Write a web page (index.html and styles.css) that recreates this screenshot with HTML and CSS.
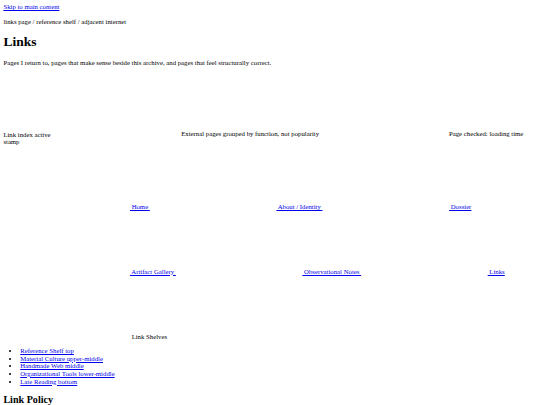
FILE: index.html
```html
<!DOCTYPE html>
<html lang="en">
<head>
<meta charset="utf-8">
<title>Links</title>
<link rel="stylesheet" href="styles.css">
</head>
<body>
<a class="skip" href="#main">Skip to main content</a>
<p class="crumbs">links page / reference shelf / adjacent internet</p>
<h1>Links</h1>
<p class="lede">Pages I return to, pages that make sense beside this archive, and pages that feel structurally correct.</p>
<div class="status">
  <span class="stamp">Link index active stamp</span>
  <span class="status-item"><svg class="icon" aria-hidden="true"></svg> External pages grouped by function, not popularity</span>
  <span class="status-item"><svg class="icon" aria-hidden="true"></svg> Page checked: loading time</span>
</div>
<nav class="site-nav">
  <a href="#"><svg class="icon" aria-hidden="true"></svg> Home </a>
  <a href="#"><svg class="icon" aria-hidden="true"></svg> About / Identity </a>
  <a href="#"><svg class="icon" aria-hidden="true"></svg> Dossier </a>
  <a href="#"><svg class="icon" aria-hidden="true"></svg> Artifact Gallery </a>
  <a href="#"><svg class="icon" aria-hidden="true"></svg> Observational Notes </a>
  <a href="#"><svg class="icon" aria-hidden="true"></svg> Links </a>
</nav>
<main id="main">
  <div class="shelf-label"><svg class="icon" aria-hidden="true"></svg> Link Shelves</div>
  <ul class="shelves">
    <li><a href="#shelf-top">Reference Shelf top</a></li>
    <li><a href="#shelf-upper">Material Culture upper-middle</a></li>
    <li><a href="#shelf-middle">Handmade Web middle</a></li>
    <li><a href="#shelf-lower">Organizational Tools lower-middle</a></li>
    <li><a href="#shelf-bottom">Late Reading bottom</a></li>
  </ul>
  <h2>Link Policy</h2>
  <p>Links are added when they stay useful.</p>
</main>
</body>
</html>
```
FILE: styles.css
```css
html {
  background: #fff;
}

body {
  margin: 0.5em;
  font-family: "Liberation Serif", "Times New Roman", serif;
  font-size: 6.75px;
  line-height: 1.125;
  color: #000;
}

h1 {
  line-height: 1.156;
}

h2 {
  line-height: 1.167;
}

a {
  color: #0000ee;
}

.skip {
  display: block;
}

.icon {
  width: 18.75em;
  height: 9.375em;
}

.status {
  display: flex;
  align-items: baseline;
  column-gap: 0.25em;
}

.stamp {
  width: 7.1em;
  flex: none;
}

.status-item {
  flex: none;
}

.shelves {
  padding-left: 2.5em;
}
```
